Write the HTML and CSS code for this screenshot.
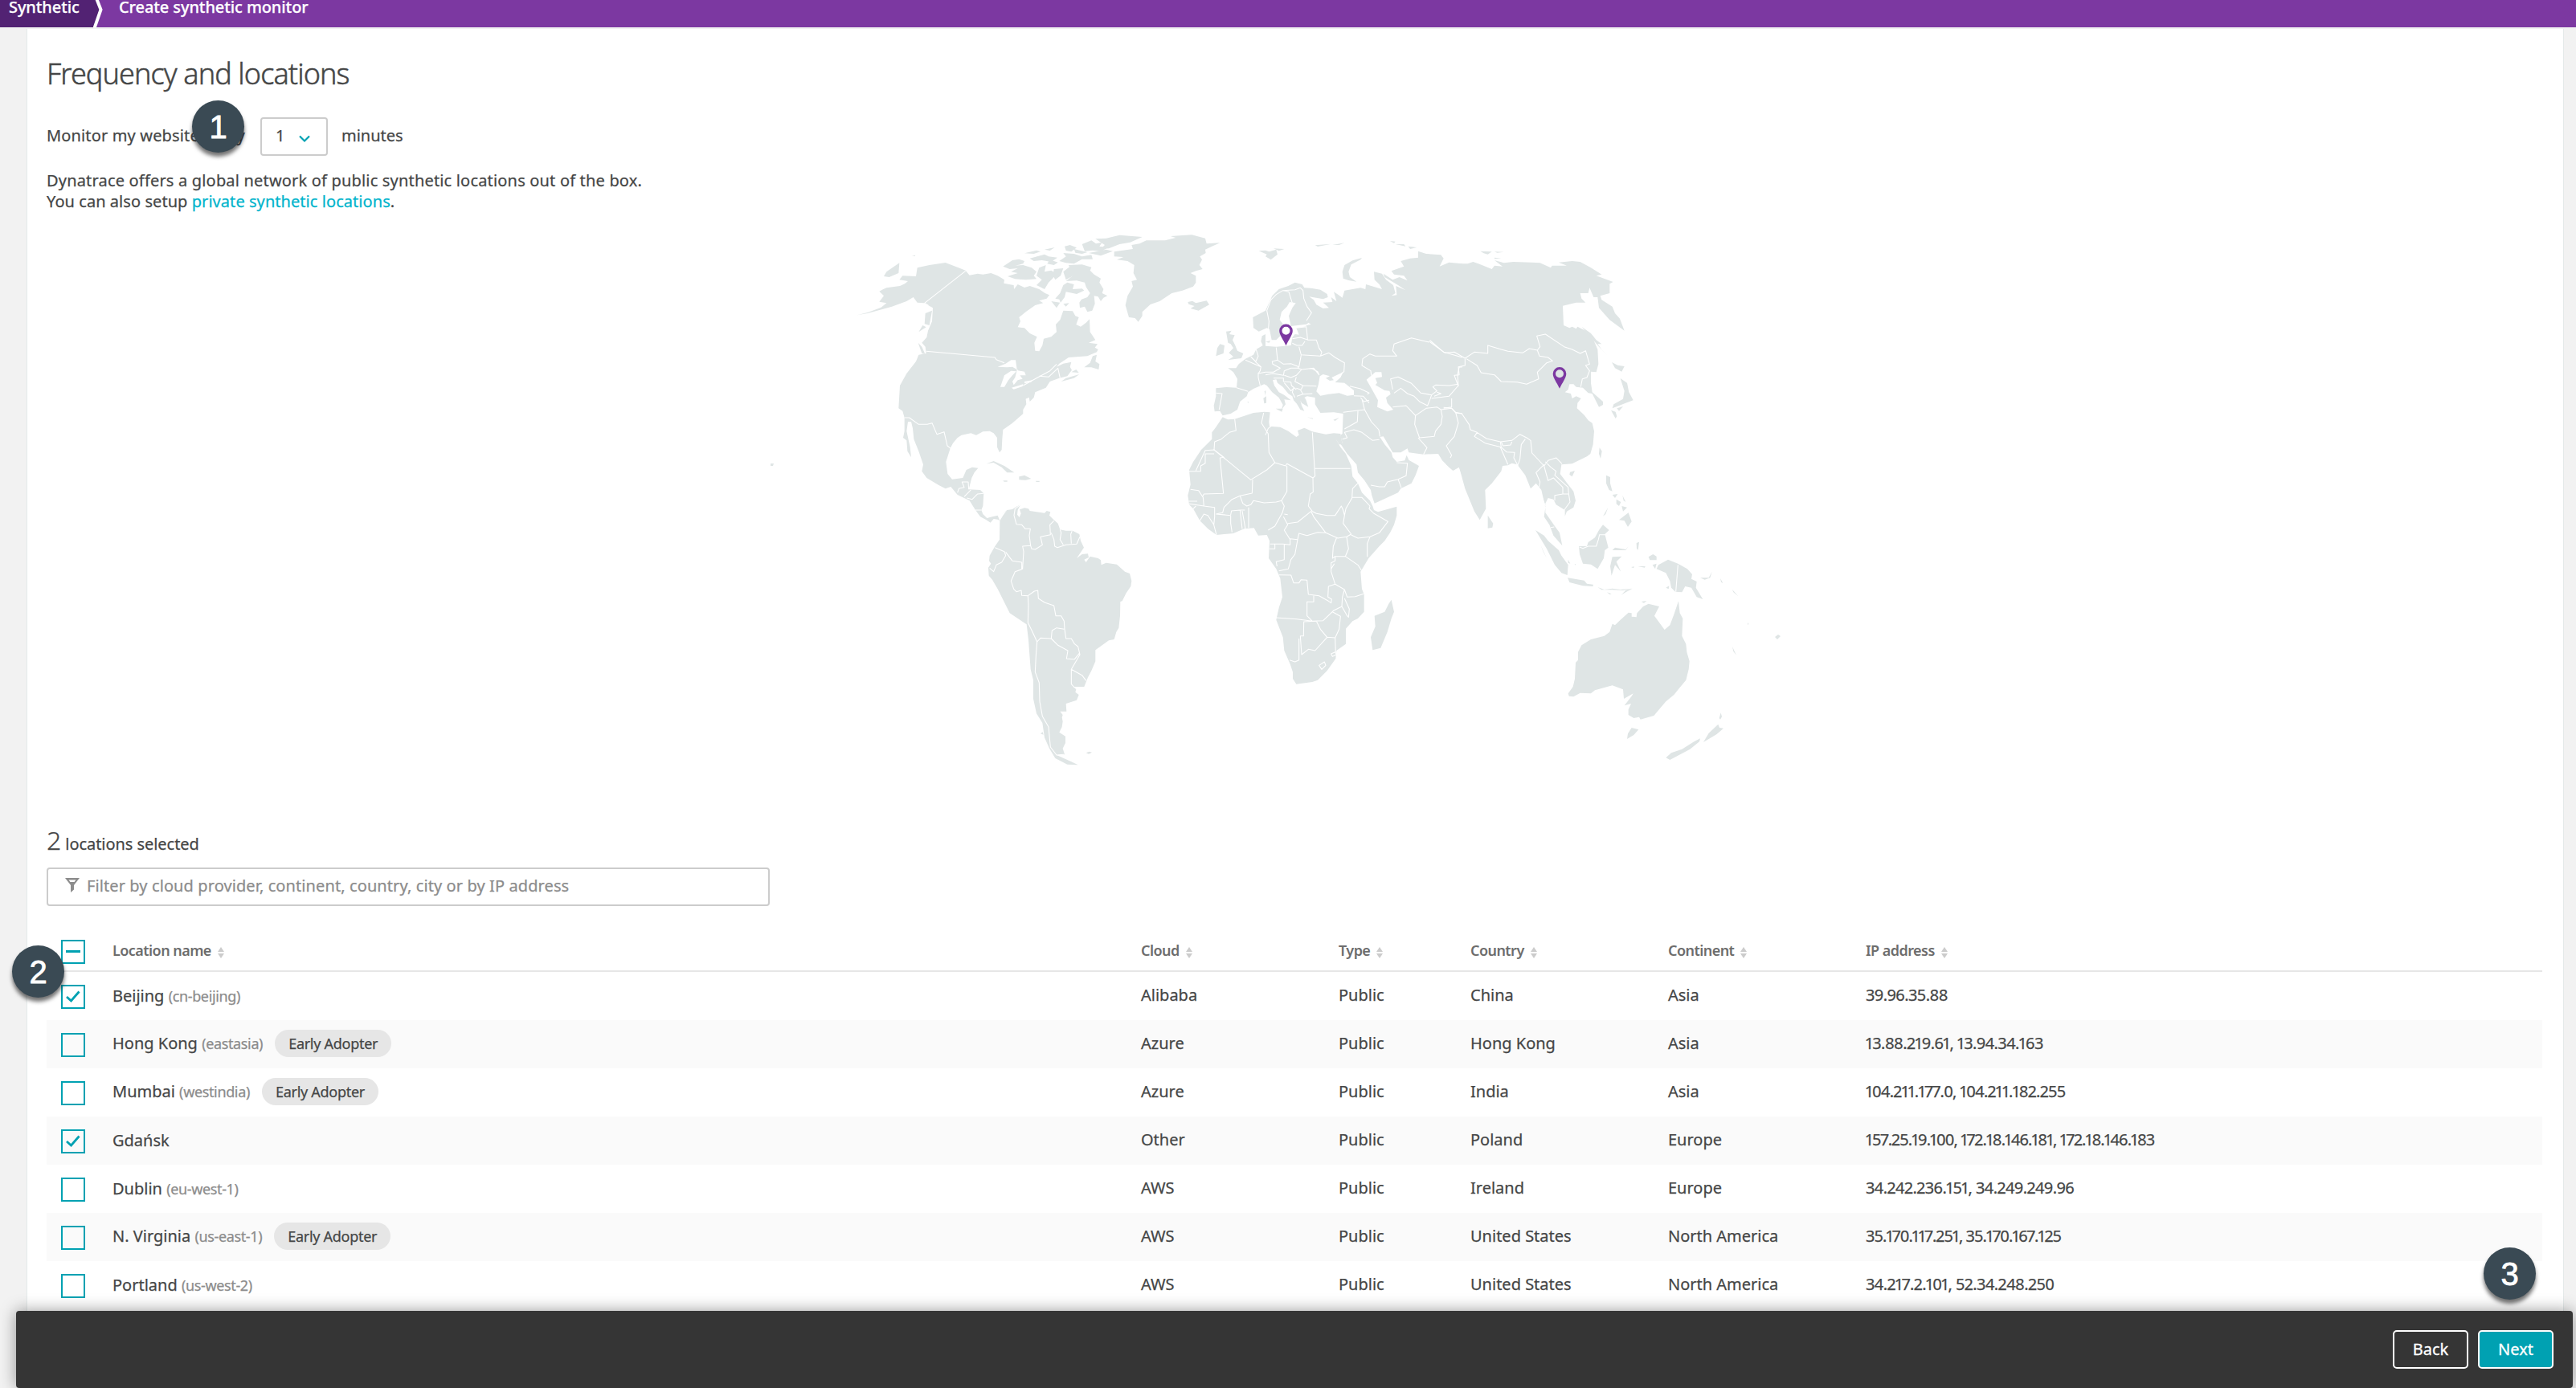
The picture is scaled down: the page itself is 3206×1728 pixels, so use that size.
FILE: index.html
```html
<!DOCTYPE html>
<html lang="en">
<head>
<meta charset="utf-8">
<title>Create synthetic monitor</title>
<link rel="stylesheet" href="styles.css">
</head>
<body>
<nav class="crumbs">
  <a class="crumb crumb--root">Synthetic</a>
  <svg class="crumb-arrow" width="20" height="34" viewBox="0 0 20 34"><path d="M0 0H5L10 12L0 34Z" fill="#522273"/><path d="M4 -2L9.500 12L1.500 35" fill="none" stroke="#fff" stroke-width="4"/></svg>
  <span class="crumb">Create synthetic monitor</span>
</nav>

<main class="panel">
  <h1 class="title">Frequency and locations</h1>
  <div class="frequency">
    <span class="frequency-label">Monitor my website every</span>
    <div class="select"><span>1</span><svg width="16" height="12" viewBox="0 0 16 12"><path d="M2 2.500L8 8.500L14 2.500" fill="none" stroke="#00a1b2" stroke-width="2.200"/></svg></div>
    <span>minutes</span>
  </div>
  <p class="intro">Dynatrace offers a global network of public synthetic locations out of the box.<br><span class="intro-second">You can also setup <a class="link">private synthetic locations</a>.</span></p>

  <div class="map">
    <svg width="1290" height="690" viewBox="940 280 1290 690">
      <g class="land">
        <g transform="translate(1060 280) scale(.33333)">
          <path d="M20 337L60 327L110 308L130 292L103 287L120 265L103 248L118 240L130 235L180 228L198 220L210 210L178 205L190 190L240 192L245 160L290 150L350 141L395 158L425 170L440 188L470 182L490 185L520 180L545 190L570 205L568 218L605 225L606 240L620 222L645 234L665 228L700 240L722 255L738 262L728 275L700 283L715 292L685 300L650 325L625 345L630 360L620 382L645 385L665 405L692 418L682 440L685 470L700 472L712 450L717 425L745 418L765 400L762 372L778 355L790 320L825 322L835 340L848 345L838 372L855 380L875 365L888 352L890 400L910 430L885 440L918 445L908 458L920 465L915 475L880 490L810 495L775 518L765 530L790 518L820 512L815 530L822 542L805 565L775 572L740 585L725 608L685 625L680 645L665 660L662 645L650 650L652 670L640 690L640 705L600 740L565 765L562 800L560 840L552 850L543 830L543 795L530 778L515 770L490 772L465 785L445 778L410 785L395 795L378 815L368 835L352 885L358 930L375 950L415 945L428 915L450 905L472 908L458 925L448 945L437 988L480 990L493 1003L490 1050L484 1065L490 1080L505 1095L525 1090L545 1085L553 1105L545 1100L530 1098L518 1112L500 1100L480 1090L462 1065L440 1030L395 1008L370 978L350 985L325 972L280 945L262 920L267 895L250 845L232 800L228 760L222 735L210 735L205 770L218 830L222 868L208 845L205 805L192 795L197 770L197 720L190 695L175 685L180 600L205 555L240 510L250 485L278 480L275 455L262 440L280 420L285 395L300 360L303 310L285 300L270 292L245 290L230 270L205 285L150 305L60 330Z"/>
          <path d="M120 192L130 175L178 142L175 180L140 195ZM225 115L238 113L236 117ZM248 440L262 455L274 482L262 480ZM275 330L300 320L290 375L272 370ZM265 375L278 382L250 400Z"/>
          <path d="M565 155L600 132L625 128L645 135L640 145L610 152L640 150L672 160L690 175L680 190L690 202L650 205L610 202L582 192L620 180L595 175L620 162L590 165ZM645 106L690 95L705 100L680 108ZM720 92L758 84L740 96ZM665 125L720 110L735 118L768 122L745 138L710 132L680 135ZM795 80L815 75L840 85L820 100L800 96ZM860 72L895 58L912 70L935 65L925 80L960 85L930 98L900 95L870 98ZM910 52L950 50L1000 38L1085 45L1040 65L1000 72L960 88L930 90L945 75L930 65ZM775 135L800 118L790 105L830 108L860 118L895 112L900 128L860 128L830 145L800 142ZM830 90L880 102L860 108L835 104ZM885 105L950 92L975 98L930 115ZM690 190L700 160L725 150L720 175L745 170L765 182L750 200L735 215L720 240L690 225L710 205ZM755 165L790 162L780 190L760 205L752 190ZM740 130L770 140L755 150L730 145ZM790 175L815 155L850 165L835 185L800 205Z"/>
          <path d="M810 150L860 148L895 158L890 170L905 185L930 200L925 215L940 240L935 255L955 265L940 272L930 285L920 268L905 265L908 295L898 320L880 325L870 305L852 310L850 290L858 278L880 270L890 255L875 232L870 215L840 208L800 210L825 190Z"/>
          <path d="M760 275L778 255L790 225L805 215L830 222L825 240L860 238L868 245L840 258L800 250L795 270L780 290L775 278ZM790 295L812 292L800 305ZM745 285L778 290L765 310Z"/>
          <path d="M980 100L1050 90L1045 75L1075 70L1100 58L1170 58L1210 48L1190 42L1270 37L1320 50L1325 70L1375 67L1345 80L1320 92L1322 105L1300 118L1308 130L1298 150L1310 165L1285 172L1265 180L1285 190L1285 215L1275 230L1235 245L1195 255L1150 285L1115 297L1085 325L1085 340L1070 362L1058 348L1035 345L1022 300L1030 265L1050 230L1045 210L1065 205L1052 180L1055 150L1030 135L990 130L1015 120L980 118Z"/>
          <path d="M1255 288L1272 284L1285 292L1325 283L1335 298L1295 320L1265 312L1280 303L1258 296ZM868 532L890 515L900 490L915 485L910 510L925 520L922 540L895 532ZM782 585L800 572L850 558L830 572ZM820 550L838 540L848 552ZM503 892L530 882L570 900L607 925L580 925L560 905L530 888ZM625 940L645 935L670 948L650 953L625 952ZM565 955h16v4h-12zM687 956h14v4h-12zM560 1080L575 1070L585 1062"/>
        </g>
        <path d="M959 577l4 0-1 3-3 0zM2209 793l4-3 3 2-4 4z"/>
        <g transform="translate(1200 600) scale(.33333)">
          <path d="M133 145L145 125L160 105L180 102L195 92L210 85L200 105L198 122L206 132L212 118L207 103L225 97L240 100L245 108L270 112L300 116L308 108L322 112L318 125L335 142L350 155L358 178L380 182L405 182L430 195L435 220L447 245L420 285L440 270L462 268L465 282L448 290L455 300L470 278L500 285L510 292L512 310L530 302L570 308L600 335L618 342L625 370L622 390L605 415L590 445L583 447L582 500L577 545L568 560L560 588L540 592L490 628L490 670L475 705L462 730L448 765L408 765L418 775L415 785L428 795L420 815L380 828L382 857L358 857L368 870L365 880L368 895L365 915L355 935L378 950L378 975L368 995L375 1018L345 1020L400 1045L425 1057L385 1055L340 1032L318 995L300 955L292 900L270 865L258 810L258 740L248 700L240 590L233 532L170 490L155 460L125 400L105 365L92 350L90 320L100 305L93 295L95 275L115 240L132 215ZM285 940l8-6 3 10zM455 1012l12-5 10 3-12 6z"/>
        </g>
        <g transform="translate(1460 280) scale(.33333)">
          <path d="M370 265L395 240L430 228L455 215L482 222L490 235L515 236L550 242L575 258L578 270L560 277L508 268L525 280L535 298L560 312L582 310L560 290L595 288L590 270L610 285L600 250L618 262L632 272L640 245L670 240L700 235L718 240L720 222L780 240L770 222L752 205L750 175L780 182L795 205L822 225L830 255L815 265L835 262L832 228L868 244L840 225L790 195L785 182L820 205L845 195L875 208L862 190L825 185L815 172L862 155L850 135L885 125L915 122L915 98L945 108L1000 112L1010 125L995 155L1030 140L1080 145L1080 940L1068 905L1045 918L1030 905L1005 880L990 855L935 857L880 850L875 835L850 850L820 850L800 815L785 790L772 792L790 820L815 850L820 868L835 885L865 880L872 860L880 878L918 900L905 935L890 965L850 985L840 1000L752 1040L742 1010L738 990L715 955L690 925L685 895L650 855L630 825L608 797L632 815L625 785L632 780L635 705L600 700L550 702L530 670L530 645L500 640L490 645L495 650L505 680L480 665L475 655L480 675L490 695L475 690L462 668L450 655L445 640L430 630L410 605L390 590L385 577L372 580L378 600L395 625L415 635L440 655L415 652L420 670L405 690L410 672L395 645L370 625L350 600L340 595L300 612L280 625L275 640L250 660L240 690L215 705L185 712L175 695L155 697L152 675L160 640L160 610L200 606L237 608L240 575L225 550L205 535L235 535L245 520L270 500L300 485L310 465L335 450L328 435L332 415L345 408L345 430L345 452L385 455L440 450L445 420L455 408L470 410L460 385L490 380L510 370L440 378L432 340L445 310L458 292L435 288L425 305L405 325L398 355L410 370L400 415L385 430L368 430L360 390L350 385L320 398L300 385L298 345L345 320Z"/>
          <path d="M383 686L410 686L406 698ZM337 647L348 640L348 665L340 667ZM341 622l5-4-1 20zM198 398L218 395L210 408L230 412L222 430L232 450L240 470L262 480L255 498L225 502L205 505L225 492L208 478L225 460L215 445L205 440ZM165 460L175 445L192 450L188 480L160 490ZM320 97L345 95L358 100L385 92L390 110L365 130L345 118L350 110ZM375 88L415 90L395 97ZM635 200L632 175L640 150L670 133L705 123L700 130L665 148L655 175L660 195L685 212L655 207ZM810 60l20 2-5 6zM830 72L862 72L868 80ZM878 80L910 84L885 90ZM500 718L522 722L522 725ZM598 728L620 720L605 732ZM530 76l60-5-50 10zM595 75l45-8-20 8zM345 437l18-5-4 8zM277 661l6 0-3 4z"/>
        </g>
        <g transform="translate(1460 580) scale(.33333)">
          <path d="M185 -182L205 -173L230 -175L300 -198L340 -202L362 -200L358 -165L360 -148L400 -145L430 -130L460 -108L470 -115L465 -132L490 -142L520 -128L570 -118L600 -122L625 -120L632 -80L620 -80L605 -105L625 -70L645 -45L665 0L670 40L690 65L705 100L735 130L745 150L750 165L765 172L835 152L835 185L825 220L810 250L790 280L770 300L730 345L700 395L705 460L713 480L713 545L690 570L670 580L645 608L645 665L610 690L607 720L575 765L540 800L520 807L460 815L447 795L447 770L437 740L415 690L410 640L385 575L395 530L408 490L400 420L385 385L357 345L360 280L350 258L318 260L302 232L265 235L225 252L162 258L130 235L100 205L75 160L60 145L55 110L65 70L60 15L75 -15L85 -30L105 -60L145 -100L145 -125L160 -145Z"/>
          <path d="M752 560L790 545L805 515L815 500L825 545L815 570L800 620L775 680L745 688L738 640L755 600Z"/>
        </g>
        <g transform="translate(1780 290) scale(.33333)">
          <path d="M90 115L140 115L160 108L180 115L230 135L240 122L270 125L240 102L275 112L310 108L380 110L410 112L450 130L455 122L510 122L480 110L530 105L560 108L600 130L640 155L620 160L683 183L670 190L670 225L635 235L640 250L680 275L690 300L708 320L725 365L670 325L630 280L625 240L610 240L595 205L590 225L560 225L565 245L580 260L545 260L495 272L498 345L520 355L530 350L545 358L550 350L580 365L610 400L625 435L628 490L620 520L600 518L600 560L605 595L645 630L645 642L630 650L605 600L590 598L570 578L545 575L535 565L520 565L515 585L503 595L525 600L530 618L545 610L563 618L550 635L548 655L575 680L590 700L605 710L612 740L608 790L598 825L585 835L530 862L490 865L485 900L515 940L535 965L543 1000L535 1025L510 1040L503 1058L503 1035L470 1015L460 995L440 990L430 1010L430 1045L465 1095L483 1120L493 1168L460 1130L445 1090L425 1060L430 1025L415 960L395 935L375 955L355 905L325 865L305 860L290 868L270 870L265 890L230 935L205 960L208 1030L185 1072L165 1040L130 955L115 900L105 865L90 885L60 865L60 115Z"/>
          <path d="M678 483L700 494L725 498L715 518L690 505ZM710 543L735 560L742 595L758 625L730 635L680 655L685 640L720 620L725 590ZM675 662L692 668L697 685L692 693ZM697 655L720 648L705 665ZM565 350L600 375L620 400L640 415L625 415L640 435L662 458L630 425L600 390ZM632 802L641 815L636 843L630 825ZM522 893L540 888L530 910L520 903ZM215 1055L235 1085L232 1100L215 1103ZM657 905L672 912L672 935L680 965L668 960L657 935ZM680 978L700 975L690 990ZM695 995L712 1005L705 1020L695 1012ZM715 1020L735 1025L720 1040ZM718 980L730 1005L722 1000ZM645 1058L664 1025L655 1050ZM705 1072L740 1045L752 1078L738 1098L725 1075ZM187 68L230 70L215 80L200 76ZM240 70L275 71L250 74ZM240 92L265 95L240 97Z"/>
        </g>
        <g transform="translate(1860 600) scale(.33333)">
          <path d="M153 180L185 200L200 220L240 255L250 275L275 310L272 348L250 340L225 310L195 250ZM273 358L300 362L335 368L345 380L368 383L368 390L330 388L280 375ZM385 393L410 402L440 398L470 402L515 398L480 405L440 403L400 403ZM420 412L437 418L430 420ZM473 422L490 405L515 398L490 412ZM315 240L345 240L350 225L375 208L390 180L405 160L428 180L412 195L425 245L412 255L408 285L385 325L360 308L330 305L318 270ZM440 255L450 245L490 252L500 240L490 255L450 255ZM440 280L475 278L455 298L472 335L450 310L437 350L432 315ZM530 228l10-4-4 30-5-5zM575 280L592 270L605 278L605 292L580 292ZM590 310L605 305L600 325ZM510 318l12-2-3 6zM535 315l28 0-2 5zM640 395L652 388L650 400ZM605 325L612 310L648 290L685 305L720 325L738 345L735 362L755 372L752 395L778 438L755 430L735 395L712 390L700 412L675 410L660 395L655 370L640 340ZM768 358L800 358L812 335L805 358L785 365ZM843 360L853 378L846 374ZM888 402l22 25-18-15zM172 235L195 285L182 260ZM275 290l8 15-8-3zM299 307l5 0-2 4z"/>
          <path d="M275 790L293 765L300 735L303 675L312 665L312 635L325 610L360 588L410 575L430 560L440 530L450 535L470 515L500 488L512 490L512 503L530 505L532 490L555 465L575 455L615 465L597 500L635 552L655 535L670 495L687 445L692 490L703 510L700 575L715 605L718 635L728 670L725 700L715 740L690 770L670 795L640 820L595 873L545 887L540 878L520 882L500 870L500 850L510 828L485 835L512 800L518 790L483 810L480 775L440 760L375 778L360 790L320 788L295 802L278 800ZM495 960L498 940L512 918L538 925L520 945ZM845 862l4 15-6 10-4-5zM835 905L840 918L855 920L830 942L780 972L800 938ZM768 958L765 970L730 998L655 1038L640 1030L660 1012L700 998L745 970ZM888 615L903 647L892 633ZM548 447l20-3-10 8zM945 525l4 5-3 5z"/>
        </g>
      </g>
      <g class="water">
        <g transform="translate(1060 280) scale(.33333)">
          <path d="M545 530L575 518L595 505L612 505L617 540L600 530L580 532ZM555 605L570 562L595 545L615 547L600 562L585 580L570 605ZM617 543L645 548L650 562L628 562L638 575L620 580L605 598L600 585L610 570ZM597 608L640 595L638 603L605 614ZM645 585L675 580L670 587L645 592ZM650 650L662 645L655 668Z"/>
        </g>
        <g transform="translate(1460 280) scale(.33333)">
          <path d="M535 622L543 595L548 565L560 558L585 565L570 572L585 582L600 580L592 570L635 550L625 570L605 588L640 590L675 618L675 635L650 638L620 628L580 632L550 638ZM722 578L755 550L778 550L780 568L755 572L762 590L755 598L790 618L808 620L812 632L795 645L800 665L822 690L800 697L762 680L765 655L740 610ZM505 365L515 372L495 375Z"/>
        </g>
      </g>
      <g class="borders">
        <g transform="translate(1060 280) scale(.33333)">
          <path d="M425 172L272 292L285 300L282 315L300 310M278 472L535 495L540 503L570 515M617 540L620 545M640 600L690 572L740 545L765 520M700 565L735 568L770 535L778 572M197 720L215 720L250 745L282 745L300 740L318 782L345 773L357 825L370 835M395 1000L400 985L420 980L412 960H435L437 988M420 1015L445 990M430 1020L450 1025L470 1005L493 1003M462 1065L484 1065"/>
        </g>
        <g transform="translate(1200 600) scale(.33333)">
          <path d="M210 85L190 100L186 125L195 158L215 160L228 175L247 175L243 200L248 238L218 240L222 260L218 325L190 335L175 370L185 400L195 410L213 405L215 424L238 425L262 408L275 405L277 435L300 450L335 462L342 500L362 500L373 520L375 550L380 585L400 585L412 605L425 615L432 645L400 700L440 722L455 742M248 238L252 250L265 252L292 235L285 205L322 197L320 160L335 145M325 190L335 215L338 240L348 245L380 235L420 232L432 205M358 178L362 190L358 215L370 235M403 182L398 195L400 230M115 245L150 260L155 275L140 300L120 310L110 335L95 322M155 262L180 295L215 300L215 325M238 425L240 460L238 525L255 560L272 597L285 583L325 585L328 555L345 545L373 550M325 585L350 610L387 630L382 660L412 662L430 640M272 597L268 650L265 710L280 750L282 820L292 875L315 915L322 990L345 1020L372 1018M400 700L400 755L412 768"/>
        </g>
        <g transform="translate(1460 280) scale(.33333)">
          <path d="M355 400L358 360L350 320L365 280L385 260L410 245L432 250L445 292M410 245L455 242L475 235M475 235L485 245L488 275L500 305L517 328L498 358M460 385L497 380L500 405L502 430L535 430L545 460L555 475L550 490L582 478L605 495L640 515L638 548L625 558M445 425L475 420L500 428M445 442L462 450L482 450L492 435M470 455L478 485L550 490M478 487L470 530L440 518L412 520L390 505L385 458M310 465L318 490L308 512L328 530L325 545L318 555L345 550L375 550L400 535L372 520L370 510L390 505M270 505L328 530M290 492L308 510M318 552L318 570L325 600M237 608L280 622M160 628L183 630L172 690M345 560L372 555L412 562L415 545L440 535L465 535L470 530M415 562L440 570L460 562L480 540L465 535M480 540L525 535L545 560L540 548L515 535M460 568L455 585L485 600L535 602M375 572L412 572L412 585L440 587L442 600L460 615M415 590L440 620L450 610L445 625L455 645M460 610L475 615L485 632L520 630M485 600L478 615M485 632L462 640M660 602L700 612L732 628L725 632M675 638L710 640L732 665M700 645L712 660L732 655M635 700L715 690L705 650M690 695L688 735L640 762M715 690L740 735L768 765L772 790M675 765L705 775L745 805L770 802M632 800L650 795L640 775L675 765M738 972L770 978L790 978L800 960L840 950L870 937L875 890L835 888M840 950L852 982M820 680L870 675L905 712L902 745L920 795L975 790L980 770L1000 745L1005 715L1000 690L985 680L945 685L905 712M915 795L948 832L935 857M825 628L850 610L875 630L900 640L920 660L950 675L960 650L965 635L925 628L890 592L840 568L812 575L820 615M965 635L985 620L970 605L980 598L1030 600L1065 595M740 562L738 545L705 525L708 500L735 482L755 490L835 490L820 470L825 445L890 422L955 438L960 432L1010 475L1080 495M1080 530L1068 532L1062 560L1065 600L1030 640L965 648M985 625L1000 630L975 640M1000 690L1040 685L1055 700L1080 705M1040 648L1040 680L1010 685M1055 700L1065 740L1050 790L1020 825L1040 860L1035 870"/>
        </g>
        <g transform="translate(1460 580) scale(.33333)">
          <path d="M230 -175L235 -132L210 -125L180 -100L155 -90L153 -60L290 52L350 15L380 -12L420 0L425 -8L522 45L530 38L520 -125M338 -198L330 -160L355 -120L358 -50L380 -12M345 -115L355 -140L368 -150M530 10H662M522 45L523 98L512 105L505 150L520 170M153 -45H120V-10L103 0V20H60M155 -60L120 -58L85 18M153 -60L190 -32L175 -30L188 103L115 105L110 115M65 88L95 92L112 118L115 150L60 142M58 132H90M85 150L75 160M115 150L155 155V190L152 220L130 185L115 180L100 205M152 220L162 258M160 180L185 175L190 155L220 125L250 112L295 102L297 52M160 180L215 185V215L220 248M215 183L218 168L250 165L258 235M250 165L268 165M258 168L270 235M282 155L282 232M250 112L260 140L275 150L290 145L300 130L340 138L385 135L405 130L425 95L425 0M405 130L415 150L408 175L380 225L355 240M415 180L428 182M412 190L428 220L415 240L437 275L437 295L410 292H362M360 310H380V292M415 292L415 350L385 358L388 375M428 215L465 210L515 170L525 190L570 250L540 248L500 260L470 252L465 275L437 272M520 170L535 178L575 185L605 185L628 150L635 165L640 185L635 215L665 255L648 265L615 270L570 250M648 265L655 310L643 338H605L595 345L598 300L610 270M643 338L690 370L703 390M640 185L645 160L668 120L670 85L690 65M668 118L705 118L735 150L732 160L750 178L802 208L770 250L735 265L690 270L665 258M735 265L725 290L725 340M465 275L455 330L440 350L430 385L395 392M395 407L440 408L450 437L470 437L478 425L500 427L505 480L545 485L580 505L590 512L592 498L578 490L580 450L605 442L590 395L590 362L605 355L605 340M590 385L602 365M605 442L640 462L650 490L680 488L712 478M640 462L632 490L630 525L600 540L560 578L520 580L462 572L385 567M500 560V508H525V485M500 560L520 580M630 525L650 560L655 565L658 535L640 495M595 545L625 562L620 610L605 642L575 640L550 610L535 580L488 582L487 635H475L480 705L505 685L530 690L575 640M605 642L607 700M590 702L605 695L610 705L595 712ZM470 645V725L455 732L435 725M545 745L565 732L570 745L555 760Z"/>
        </g>
        <g transform="translate(1780 290) scale(.33333)">
          <path d="M0 408L55 448L90 445L130 468L165 445L215 450L215 420L265 435L290 442L345 448L370 432L400 438L410 425L398 385L430 378L500 425L530 435L560 450L580 440L595 490L580 495L595 515L585 540L568 545L562 575M135 470L175 495L190 522L240 530L265 555L325 557L360 565L405 545L400 520L415 505L435 485L457 478L440 465L408 460L400 438M130 470L130 495L105 500L108 530L90 532L105 573M50 652L80 655L95 672L118 675L145 715L150 735L175 745L210 768L262 780L305 775L335 752L360 765L375 775L380 822L425 870L440 850L470 840L492 862M175 745L165 760L205 785L265 800L262 780M265 780L272 795L300 792L305 780M262 800L275 830L290 865M265 800L285 818L315 820L312 840L328 870M355 770L340 790L335 845L328 865M425 865L395 895L410 930L405 955L430 1020M425 870L440 925L460 915L495 950L495 975L465 980L465 1000M430 855L450 875L470 890L465 905L515 950L517 975L495 975M517 975L522 1005L500 1035M463 1098L450 1100"/>
        </g>
        <g transform="translate(1860 600) scale(.33333)">
          <path d="M317 243L330 248L350 240L380 240L388 215L392 197L425 197M685 310L677 410"/>
        </g>
      </g>
      <g fill="#7c38a1" fill-rule="evenodd">
        <circle cx="1600.500" cy="411.500" r="6" fill="#fff"/>
        <path d="M1600.500 403.500a8.300 8.300 0 0 1 8.300 8.300c0 5-4.800 11-8.300 18.400c-3.500-7.400-8.300-13.400-8.300-18.400a8.300 8.300 0 0 1 8.300-8.300zm0 3.300a5 5 0 1 0 0 10a5 5 0 1 0 0-10z"/>
        <path d="M1941 457a8.300 8.300 0 0 1 8.300 8.300c0 5-4.800 11-8.300 18.400c-3.500-7.400-8.300-13.400-8.300-18.400a8.300 8.300 0 0 1 8.300-8.300zm0 3.300a5 5 0 1 0 0 10a5 5 0 1 0 0-10z"/>
      </g>
    </svg>
  </div>

  <div class="selected"><span class="selected-count">2</span><span>locations selected</span></div>
  <div class="filter">
    <svg width="18" height="18" viewBox="0 0 18 18"><path fill="#8c8c8c" fill-rule="evenodd" d="M0 0H18L11 9V14.500L7 18V9ZM4.500 2.600L6.500 5H11.500L13.500 2.600Z"/></svg>
    <span>Filter by cloud provider, continent, country, city or by IP address</span>
  </div>

  <div class="table">
    <div class="row row--head">
      <div class="check"><i class="box"><svg width="26" height="26" viewBox="0 0 26 26"><path d="M4 12.500H22" stroke="#00a1b2" stroke-width="3"/></svg></i></div>
      <div class="head">Location name<i class="sort"></i></div><div class="head">Cloud<i class="sort"></i></div><div class="head">Type<i class="sort"></i></div><div class="head">Country<i class="sort"></i></div><div class="head">Continent<i class="sort"></i></div><div class="head">IP address<i class="sort"></i></div>
    </div>
    <div class="row">
      <div class="check"><i class="box"><svg width="26" height="26" viewBox="0 0 26 26"><path d="M5 13L10.500 18L20.500 6.500" fill="none" stroke="#00a1b2" stroke-width="2.800"/></svg></i></div>
      <div class="name">Beijing <small>(cn-beijing)</small></div><div>Alibaba</div><div>Public</div><div>China</div><div>Asia</div><div class="ip">39.96.35.88</div>
    </div>
    <div class="row">
      <div class="check"><i class="box"></i></div>
      <div class="name name--tagged">Hong Kong <small>(eastasia)</small><b class="tag">Early Adopter</b></div><div>Azure</div><div>Public</div><div>Hong Kong</div><div>Asia</div><div class="ip">13.88.219.61, 13.94.34.163</div>
    </div>
    <div class="row">
      <div class="check"><i class="box"></i></div>
      <div class="name name--tagged">Mumbai <small>(westindia)</small><b class="tag">Early Adopter</b></div><div>Azure</div><div>Public</div><div>India</div><div>Asia</div><div class="ip ip--tight">104.211.177.0, 104.211.182.255</div>
    </div>
    <div class="row">
      <div class="check"><i class="box"><svg width="26" height="26" viewBox="0 0 26 26"><path d="M5 13L10.500 18L20.500 6.500" fill="none" stroke="#00a1b2" stroke-width="2.800"/></svg></i></div>
      <div class="name">Gdańsk</div><div>Other</div><div>Public</div><div>Poland</div><div>Europe</div><div class="ip ip--tighter">157.25.19.100, 172.18.146.181, 172.18.146.183</div>
    </div>
    <div class="row">
      <div class="check"><i class="box"></i></div>
      <div class="name">Dublin <small>(eu-west-1)</small></div><div>AWS</div><div>Public</div><div>Ireland</div><div>Europe</div><div class="ip">34.242.236.151, 34.249.249.96</div>
    </div>
    <div class="row">
      <div class="check"><i class="box"></i></div>
      <div class="name name--tagged">N. Virginia <small>(us-east-1)</small><b class="tag">Early Adopter</b></div><div>AWS</div><div>Public</div><div>United States</div><div>North America</div><div class="ip ip--tighter">35.170.117.251, 35.170.167.125</div>
    </div>
    <div class="row">
      <div class="check"><i class="box"></i></div>
      <div class="name">Portland <small>(us-west-2)</small></div><div>AWS</div><div>Public</div><div>United States</div><div>North America</div><div class="ip">34.217.2.101, 52.34.248.250</div>
    </div>
  </div>
</main>

<footer class="actions">
  <button class="btn">Back</button>
  <button class="btn btn--primary">Next</button>
</footer>

<span class="callout callout--frequency">1</span>
<span class="callout callout--locations">2</span>
<span class="callout callout--next">3</span>
</body>
</html>
```
FILE: styles.css
```css
* { box-sizing: border-box; }

body {
  margin: 0;
  height: 1728px;
  overflow: hidden;
  position: relative;
  display: flex;
  flex-direction: column;
  background: #f2f2f2;
  color: #454646;
  font: 20px/26px "Noto Sans", "Open Sans", sans-serif;
  -webkit-text-stroke: 0.25px currentColor;
}

.crumbs {
  flex: none;
  display: flex;
  height: 34px;
  overflow: hidden;
  background: #7c38a1;
  color: #fff;
  font-weight: 500;
  letter-spacing: -0.1px;
}
.crumb { line-height: 18px; }
.crumb--root { width: 116px; padding-left: 11px; background: #522273; }
.crumb-arrow { margin-right: 12px; }

.panel {
  flex: 1 0 auto;
  margin: 2px 15px 0 33px;
  padding: 34px 26px 0 24px;
  border: solid #e4eaea;
  border-width: 0 1px;
  background: #fff;
}

.title {
  margin: 0 0 32px;
  font-size: 36px;
  line-height: 44px;
  font-weight: 300;
  letter-spacing: -0.9px;
  -webkit-text-stroke-width: 0.5px;
}

.frequency { display: flex; height: 48px; line-height: 46px; }
.frequency-label { width: 266px; letter-spacing: 0.15px; }
.select {
  display: flex;
  width: 84px;
  height: 48px;
  margin-right: 17px;
  padding-left: 17px;
  border: 2px solid #ccc;
  border-radius: 4px;
  line-height: 42px;
}
.select svg { margin: 19px 0 0 17px; }

.intro { margin: 18px 0 16px; letter-spacing: 0.18px; }
.intro-second { letter-spacing: 0.06px; }
.link { color: #00b4cc; }

.map { height: 690px; padding-left: 882px; }
.map svg { display: block; }
.land { fill: #dfe5e5; }
.water { fill: #fff; }
.borders { fill: none; stroke: #fff; stroke-width: 3.2; stroke-linejoin: round; }

.selected {
  display: flex;
  align-items: baseline;
  gap: 6px;
  height: 40px;
  margin: 56px 0 14px;
  line-height: 40px;
  letter-spacing: -0.05px;
}
.selected-count { font-size: 32px; font-weight: 300; letter-spacing: -1px; }

.filter {
  display: flex;
  align-items: center;
  gap: 9px;
  width: 900px;
  height: 48px;
  margin-bottom: 30px;
  padding: 0 0 2px 21px;
  border: 2px solid #ccc;
  border-radius: 4px;
  color: #8c8c8c;
  letter-spacing: 0.1px;
}
.filter svg { margin-bottom: 2px; }

.row {
  display: grid;
  grid-template-columns: 82px 1280px 246px 164px 246px 246px 1fr;
  align-items: center;
  height: 60px;
  padding-bottom: 3px;
}
.row:nth-child(odd) { background: #fafafa; }
.row.row--head {
  height: 52px;
  padding-bottom: 0;
  border-bottom: 2px solid #e6e6e6;
  background: none;
  color: #6d6d6d;
  font-size: 18px;
  font-weight: 600;
  letter-spacing: -0.55px;
  -webkit-text-stroke-width: 0;
}
.head { display: flex; align-items: center; gap: 8px; }
.check { padding: 5px 0 0 18px; }
.row--head .check { padding-top: 4px; }
.box { display: block; width: 30px; height: 30px; border: 2px solid #00a1b2; }
.box svg { display: block; }

.sort { display: flex; flex-direction: column; gap: 2px; padding-top: 6px; }
.sort::before, .sort::after { content: ""; border: solid transparent; border-width: 0 4.5px; }
.sort::before { border-bottom: 6px solid #ccc; }
.sort::after { border-top: 6px solid #ccc; }

.name { padding-top: 3px; }
.name--tagged { display: flex; align-items: center; padding-top: 0; white-space: pre; }
.name small { color: #8c8c8c; font-size: 18px; letter-spacing: -0.36px; }
.tag {
  height: 34px;
  margin-left: 15px;
  padding: 0 17px;
  border-radius: 17px;
  background: #e6e6e6;
  font-size: 18px;
  font-weight: 400;
  line-height: 34px;
  letter-spacing: -0.28px;
}
.ip { font-variant-numeric: proportional-nums; letter-spacing: -0.58px; }
.ip--tight { letter-spacing: -0.74px; }
.ip--tighter { letter-spacing: -0.93px; }

.actions {
  position: absolute;
  left: 20px;
  right: 4px;
  bottom: 0;
  height: 96px;
  display: flex;
  justify-content: flex-end;
  gap: 12px;
  padding: 24px;
  border-radius: 4px;
  background: #353535;
  box-shadow: 0 0 20px rgba(0, 0, 0, 0.4);
}
.btn {
  width: 94px;
  height: 48px;
  padding: 0 0 1px;
  border: 2px solid #fff;
  border-radius: 5px;
  background: transparent;
  color: #fff;
  font: 20px "Noto Sans", "Open Sans", sans-serif;
  -webkit-text-stroke: 0.3px #fff;
}
.btn--primary { background: #00a1b2; }

.callout {
  position: absolute;
  width: 65px;
  height: 65px;
  border-radius: 50%;
  background: #3a4a54;
  box-shadow: 0 5px 5px rgba(0, 0, 0, 0.55);
  color: #fff;
  font: 40px/67px "Liberation Sans", Arial, sans-serif;
  text-align: center;
  -webkit-text-stroke: 0.8px #fff;
}
.callout--frequency { left: 239px; top: 125px; }
.callout--locations { left: 15px; top: 1177px; }
.callout--next { left: 3091px; top: 1553px; }
```
